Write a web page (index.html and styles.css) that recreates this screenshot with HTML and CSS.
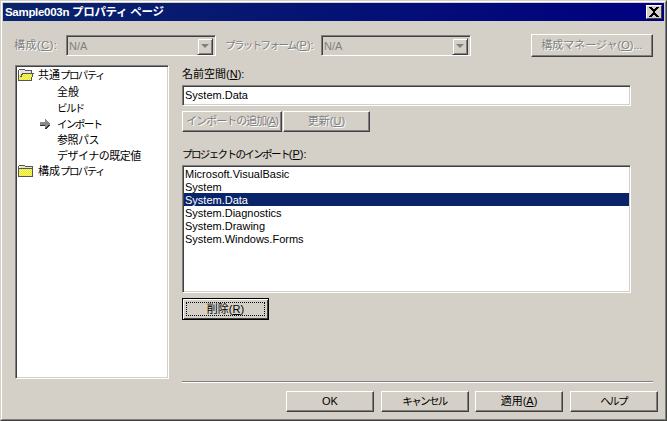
FILE: index.html
```html
<!DOCTYPE html>
<html lang="ja">

<head>
    <meta charset="UTF-8">
    <title>Sample003n プロパティ ページ</title>
    <link rel="stylesheet" href="styles.css">
</head>

<body>
    <div class="window">
        <div class="window-inner">
            <div class="titlebar">
                <span class="title">Sample003n プロパティ ページ</span>
                <span class="close">
                    <svg width="12" height="10" viewBox="0 0 12 10" shape-rendering="crispEdges">
                        <path fill="#000" d="M1 0h3v1h1v1h2V1h1V0h3v1h-1v1H9v1H8v1H7v2h1v1h1v1h1v1h1v1H8V9H7V8H5v1H4v1H1V9h1V8h1V7h1V6h1V4H4V3H3V2H2V1H1z" />
                    </svg>
                </span>
            </div>

            <div class="config-row">
                <label class="disabled config-label first">構成(<u>C</u>):</label>
                <div class="combo sunken">
                    <span class="combo-value">N/A</span>
                    <span class="combo-arrow"><i></i></span>
                </div>
                <label class="disabled config-label second"><span class="kana-tight">プラットフォーム</span>(<u>P</u>):</label>
                <div class="combo sunken">
                    <span class="combo-value">N/A</span>
                    <span class="combo-arrow"><i></i></span>
                </div>
                <button class="btn manager disabled">構成マネージャ(<u>O</u>)...</button>
            </div>

            <div class="main">
                <div class="tree sunken">
                    <svg class="defs" width="0" height="0">
                        <pattern id="dither" width="2" height="2" patternUnits="userSpaceOnUse">
                            <rect width="2" height="2" fill="#ffff40" />
                            <rect width="1" height="1" fill="#e0e060" />
                            <rect x="1" y="1" width="1" height="1" fill="#e0e060" />
                        </pattern>
                    </svg>
                    <div class="tree-root">
                        <svg class="folder" width="16" height="14" viewBox="0 0 16 14" shape-rendering="crispEdges">
                            <path fill="#e4e4dc" d="M2 2h5l1 1h6v2H5l-3 4z" />
                            <path fill="url(#dither)" d="M1 7h3l1-2h10l-2 7H1z" />
                            <path fill="none" stroke="#555" d="M.5 12.5v-10l1-1h5l1 1h6v3M.5 12.5h12.5l2-7H4.500l-2 4" />
                        </svg>
                        <span>共通</span><span class="kana-tight">プロパティ</span>
                    </div>
                    <div class="tree-child">全般</div>
                    <div class="tree-child"><span class="kana-tight">ビルド</span></div>
                    <div class="tree-child current">
                        <svg class="arrow" width="10" height="10" viewBox="0 0 10 10" shape-rendering="crispEdges">
                            <path fill="#8a8a8a" d="M5 0h1v1h1v1h1v1h1v1h1v2H9v1H8v1H7v1H6v1H5V7H0V3h5z" />
                            <path fill="#333" d="M5 9h1V8h1V7h1V6h2v1H9v1H8v1H7v1H5zM0 6h5v1H0z" />
                        </svg>
                        <span class="kana-tight">インポート</span>
                    </div>
                    <div class="tree-child mixed">参照パス</div>
                    <div class="tree-child mixed">デザイナの既定値</div>
                    <div class="tree-root">
                        <svg class="folder" width="16" height="14" viewBox="0 0 16 14" shape-rendering="crispEdges">
                            <path fill="url(#dither)" d="M1 4h14v8H1z" />
                            <path fill="#e4e4dc" d="M2 2h5l1 1h6v1H2z" />
                            <path fill="none" stroke="#555" d="M.5 12.500v-10l1-1h5l1 1h6.500v10zM1 4.500h13" />
                        </svg>
                        <span>構成</span><span class="kana-tight">プロパティ</span>
                    </div>
                </div>

                <div class="panel">
                    <label class="field-label">名前空間(<u>N</u>):</label>
                    <div class="textbox sunken">System.Data</div>
                    <div class="add-row">
                        <button class="btn add disabled kana">インポートの追加(<u>A</u>)</button>
                        <button class="btn update disabled">更新(<u>U</u>)</button>
                    </div>
                    <label class="field-label imports-label"><span class="kana-tight">プロジェクトのインポート</span>(<u>P</u>):</label>
                    <ul class="imports sunken">
                        <li>Microsoft.VisualBasic</li>
                        <li>System</li>
                        <li class="selected">System.Data</li>
                        <li>System.Diagnostics</li>
                        <li>System.Drawing</li>
                        <li>System.Windows.Forms</li>
                    </ul>
                    <button class="btn remove"><span class="focus">削除(<u>R</u>)</span></button>
                </div>
            </div>

            <div class="separator"></div>

            <div class="footer">
                <button class="btn action">OK</button>
                <button class="btn action"><span class="kana-tight">キャンセル</span></button>
                <button class="btn action">適用(<u>A</u>)</button>
                <button class="btn action"><span class="kana-tight">ヘルプ</span></button>
            </div>
        </div>
    </div>
</body>

</html>
```

FILE: styles.css
```css
* {
    margin: 0;
    padding: 0;
    box-sizing: border-box;
    list-style: none;
}

body {
    width: 667px;
    height: 421px;
    overflow: hidden;
    background: #d4d0c8;
    color: #000;
    font-family: "Liberation Sans", "Noto Sans CJK JP", sans-serif;
    font-size: 11px;
    line-height: 13px;
}

u {
    text-underline-offset: 1px;
}

.kana-tight {
    font-size: 10.5px;
    letter-spacing: -1.6px;
}

.window {
    width: 667px;
    height: 421px;
    border: 1px solid;
    border-color: #d4d0c8 #404040 #404040 #d4d0c8;
}

.window-inner {
    height: 100%;
    padding: 1px;
    border: 1px solid;
    border-color: #fff #808080 #808080 #fff;
}

.titlebar {
    display: flex;
    align-items: center;
    justify-content: space-between;
    height: 18px;
    padding: 0 2px;
    background: linear-gradient(90deg, #0a246a, #000080);
    color: #fff;
}

.title {
    font-weight: bold;
    font-size: 11.5px;
    letter-spacing: -.3px;
}

.close {
    display: flex;
    align-items: center;
    justify-content: center;
    width: 16px;
    height: 14px;
    background: #d4d0c8;
    border: 1px solid;
    border-color: #fff #404040 #404040 #fff;
}

.sunken {
    background: #fff;
    border: 1px solid;
    border-color: #808080 #fff #fff #808080;
    box-shadow: inset 1px 1px 0 #404040, inset -1px -1px 0 #d4d0c8;
}

.btn {
    display: flex;
    align-items: center;
    justify-content: center;
    white-space: nowrap;
    background: #d4d0c8;
    border: 1px solid;
    border-color: #fff #404040 #404040 #fff;
    box-shadow: inset -1px -1px 0 #808080;
    font: inherit;
    color: #000;
}

.btn.disabled {
    color: #808080;
}

.btn.kana {
    letter-spacing: -1px;
}

.disabled {
    color: #808080;
    text-shadow: 1px 1px 0 #fff;
}

.config-row {
    display: flex;
    align-items: center;
    height: 22px;
    margin-top: 13px;
    padding-left: 11px;
}

.config-label.first {
    width: 52px;
    letter-spacing: .5px;
}

.config-label.second {
    width: 96px;
    margin-left: 9px;
}

.combo {
    display: flex;
    justify-content: space-between;
    width: 150px;
    height: 21px;
    padding: 2px;
    background: #d4d0c8;
    color: #808080;
}

.combo-value {
    padding: 2px 0;
}

.combo-arrow {
    display: flex;
    align-items: center;
    justify-content: center;
    width: 16px;
    height: 17px;
    border: 1px solid;
    border-color: #d4d0c8 #404040 #404040 #d4d0c8;
    box-shadow: inset 1px 1px 0 #fff, inset -1px -1px 0 #808080;
}

.combo-arrow i {
    border: 4px solid transparent;
    border-top: 4px solid #808080;
    border-bottom: 0;
}

.manager {
    width: 122px;
    height: 23px;
    margin-left: 60px;
}

.main {
    display: flex;
    height: 314px;
    margin-top: 9px;
    padding-left: 12px;
}

.tree {
    width: 154px;
    padding: 2px;
}

.defs {
    display: block;
}

.tree-root,
.tree-child {
    display: flex;
    align-items: center;
    height: 16px;
}

.tree-root {
    padding-bottom: 2px;
}

.mixed {
    letter-spacing: -.5px;
}

.folder {
    margin-right: 4px;
}

.tree-child {
    position: relative;
    padding-left: 39px;
}

.arrow {
    position: absolute;
    left: 22px;
    top: 3px;
}

.panel {
    width: 449px;
    margin-left: 13px;
}

.field-label {
    display: block;
    margin-top: 3px;
    height: 17px;
}

.textbox {
    height: 21px;
    padding: 3px 2px;
}

.add-row {
    display: flex;
    gap: 1px;
    margin-top: 5px;
}

.add {
    width: 100px;
    height: 21px;
}

.update {
    width: 87px;
    height: 21px;
}

.imports-label {
    margin-top: 16px;
}

.imports {
    height: 128px;
    padding: 1px;
}

.imports li {
    height: 13px;
    padding-left: 1px;
    line-height: 15px;
}

.imports .selected {
    background: #0a246a;
    color: #fff;
}

.remove {
    width: 87px;
    height: 22px;
    margin-top: 5px;
    padding: 3px;
    border-color: #000;
    box-shadow: inset 1px 1px 0 #fff, inset -1px -1px 0 #404040;
}

.focus {
    display: block;
    width: 100%;
    height: 14px;
    border: 1px dotted #000;
}

.separator {
    width: 471px;
    height: 2px;
    margin: 2px 0 0 179px;
    background: #808080;
    border-bottom: 1px solid #fff;
}

.footer {
    display: flex;
    gap: 6.5px;
    margin-top: 8px;
    padding-left: 283px;
}

.action {
    width: 88px;
    height: 21px;
}
```
